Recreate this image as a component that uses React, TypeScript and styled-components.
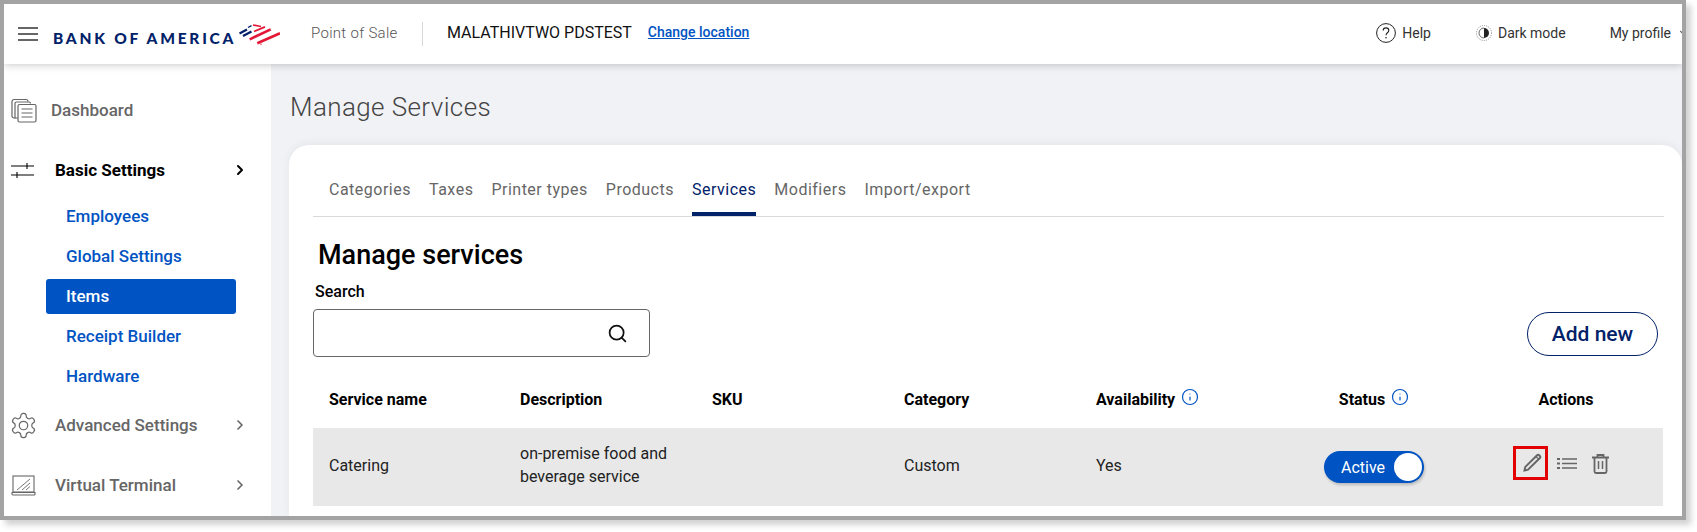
import React from 'react';
import styled, { createGlobalStyle } from 'styled-components';
import { ChevronDown, ChevronRight, Info, Search } from 'lucide-react';

const GlobalStyle = createGlobalStyle`
  html, body { margin: 0; padding: 0; background: #fff; }
  body { font-family: Roboto, "Liberation Sans", sans-serif; width: 1697px; height: 532px; overflow: hidden; }
`;

const Frame = styled.div`
  box-sizing: border-box;
  width: 1686px;
  height: 520px;
  border: 4px solid #a3a3a3;
  box-shadow: 5px 5px 6px rgba(0, 0, 0, 0.18);
  display: flex;
  flex-direction: column;
  overflow: hidden;
`;

const Header = styled.header`
  height: 60px;
  flex: none;
  display: flex;
  align-items: center;
  background: #fff;
  box-shadow: 0 1px 8px rgba(0, 0, 0, 0.22);
  position: relative;
  z-index: 2;
  white-space: nowrap;
`;

const MenuButton = styled.div`
  width: 20px;
  margin-left: 14px;
  display: flex;
  flex-direction: column;
  gap: 4px;
  span {
    height: 2px;
    background: #666;
  }
`;

const Logo = styled.div`
  display: flex;
  align-items: center;
  margin-left: 15px;
  width: 228px;
  svg {
    margin-left: 6px;
    flex: none;
  }
`;

const LogoText = styled.span`
  font-family: Lato, sans-serif;
  font-weight: 900;
  font-size: 15.5px;
  letter-spacing: 2.75px;
  line-height: 18px;
  color: #012169;
  margin-top: 8px;
  margin-right: -3px;
`;

const AppName = styled.span`
  margin-left: 30px;
  margin-bottom: 2px;
  width: 111px;
  font-size: 15px;
  font-weight: 300;
  color: #555;
  letter-spacing: 0.3px;
`;

const Location = styled.span`
  border-left: 1px solid #d8d8d8;
  height: 24px;
  padding-left: 24px;
  line-height: 22px;
  font-size: 16px;
  color: #111;
`;

const ChangeLocation = styled.a`
  margin-left: 16px;
  margin-bottom: 4px;
  font-size: 14px;
  font-weight: 500;
  color: #0053c2;
  text-decoration: underline;
`;

const HeaderRight = styled.div`
  margin-left: auto;
  display: flex;
  align-items: center;
  font-size: 14px;
  color: #333;
  margin-right: -9px;
  margin-bottom: 3px;
`;

const HeaderItem = styled.span<{ $gap: number }>`
  display: flex;
  align-items: center;
  gap: 6px;
  margin-right: ${(p) => p.$gap}px;
`;

const Body = styled.div`
  flex: 1;
  display: flex;
  min-height: 0;
`;

const Sidebar = styled.nav`
  width: 267px;
  flex: none;
  background: #fff;
  padding-top: 14.75px;
  box-sizing: border-box;
  position: relative;
  z-index: 1;
`;

const NavRow = styled.div<{ $active?: boolean; $height: number }>`
  display: flex;
  align-items: center;
  height: ${(p) => p.$height}px;
  font-size: 17px;
  font-weight: ${(p) => (p.$active ? 700 : 500)};
  color: ${(p) => (p.$active ? '#000' : '#666')};
  padding-left: 7px;
  padding-right: 23px;
`;

const NavIcon = styled.span<{ $width: number }>`
  width: ${(p) => p.$width}px;
  flex: none;
  display: flex;
`;

const NavLabel = styled.span`
  flex: 1;
`;

const SubList = styled.div`
  margin: 0 0 16.4px 42px;
  display: flex;
  flex-direction: column;
  gap: 5px;
`;

const SubItem = styled.div<{ $active?: boolean }>`
  width: 190px;
  height: 35px;
  line-height: 35px;
  box-sizing: border-box;
  padding-left: 20px;
  border-radius: 3px;
  font-size: 17px;
  font-weight: 500;
  color: ${(p) => (p.$active ? '#fff' : '#0053c2')};
  background: ${(p) => (p.$active ? '#0053c2' : 'transparent')};
`;

const Main = styled.main`
  flex: 1;
  min-width: 0;
  background: #f1f2f6;
  padding-left: 18px;
  display: flex;
  flex-direction: column;
`;

const PageTitle = styled.h1`
  margin: 0 0 0 1px;
  height: 81px;
  line-height: 86px;
  font-size: 26px;
  font-weight: 300;
  color: #444;
  letter-spacing: 0.4px;
  flex: none;
`;

const Card = styled.section`
  flex: 1;
  background: #fff;
  border-radius: 20px 20px 0 0;
  padding: 0 18px 0 24px;
  box-shadow: 0 -2px 10px rgba(0, 0, 0, 0.05);
`;

const Tabs = styled.div`
  display: flex;
  gap: 18px;
  height: 72px;
  padding-left: 16px;
  border-bottom: 1px solid #d9d9d9;
  box-sizing: border-box;
`;

const Tab = styled.div<{ $active?: boolean }>`
  font-size: 16px;
  letter-spacing: 0.5px;
  color: ${(p) => (p.$active ? '#012169' : '#666')};
  padding-top: 35px;
  box-sizing: border-box;
  height: 71px;
  border-bottom: ${(p) => (p.$active ? '4px solid #012169' : 'none')};
`;

const CardTitle = styled.h2`
  margin: 21px 0 0 5px;
  font-size: 27px;
  line-height: 34px;
  font-weight: 500;
  color: #000;
`;

const Toolbar = styled.div`
  display: flex;
  justify-content: space-between;
  align-items: flex-end;
  margin-top: 10px;
`;

const Field = styled.div`
  margin-left: 2px;
`;

const FieldLabel = styled.label`
  display: block;
  font-size: 16px;
  font-weight: 500;
  color: #000;
  line-height: 20px;
  margin-bottom: 7px;
`;

const SearchBox = styled.div`
  box-sizing: border-box;
  width: 337px;
  margin-left: -2px;
  height: 48px;
  border: 1px solid #666;
  border-radius: 4px;
  display: flex;
  align-items: center;
  justify-content: flex-end;
  padding-right: 21px;
  color: #111;
`;

const AddButton = styled.button`
  width: 131px;
  height: 44px;
  margin-right: 6px;
  margin-bottom: 1px;
  background: #fff;
  border: 1px solid #012169;
  border-radius: 22px;
  color: #012169;
  font-family: inherit;
  font-size: 21px;
  font-weight: 500;
`;

const Grid = styled.div`
  display: grid;
  grid-template-columns: 191px 192px 192px 192px 199px 190px 194px;
`;

const HeadCell = styled.div<{ $center?: boolean }>`
  height: 71px;
  box-sizing: border-box;
  padding-top: 13px;
  display: flex;
  align-items: center;
  justify-content: ${(p) => (p.$center ? 'center' : 'flex-start')};
  gap: 6px;
  padding-left: ${(p) => (p.$center ? 0 : 16)}px;
  font-size: 16px;
  font-weight: 700;
  color: #000;
  svg {
    color: #0053c2;
    margin-top: -5px;
  }
`;

const Cell = styled.div<{ $center?: boolean }>`
  box-sizing: border-box;
  height: 78px;
  padding-bottom: 4px;
  background: #e8e8e8;
  display: flex;
  align-items: center;
  justify-content: ${(p) => (p.$center ? 'center' : 'flex-start')};
  padding-left: ${(p) => (p.$center ? 0 : 16)}px;
  font-size: 16px;
  line-height: 23px;
  color: #222;
`;

const Toggle = styled.div`
  box-sizing: border-box;
  width: 100px;
  height: 32px;
  margin-top: 4px;
  border-radius: 16px;
  background: #0053c2;
  color: #fff;
  font-size: 16px;
  display: flex;
  align-items: center;
  justify-content: space-between;
  padding: 0 2px 0 17px;
  box-shadow: 1px 2px 3px rgba(0, 0, 0, 0.2);
  i {
    width: 28px;
    height: 28px;
    background: #fff;
    border-radius: 50%;
  }
`;

const Actions = styled.div`
  height: 78px;
  background: #e8e8e8;
  display: flex;
  align-items: center;
  padding-left: 44px;
`;

const EditButton = styled.span`
  box-sizing: border-box;
  width: 35px;
  height: 34px;
  border: 3px solid #e30000;
  padding-left: 4px;
  display: flex;
  align-items: center;
  justify-content: center;
  margin-bottom: 9px;
`;

const ActionIcon = styled.span<{ $left: number }>`
  display: flex;
  margin-left: ${(p) => p.$left}px;
  margin-bottom: 7px;
`;

const GearSlot = styled.span`
  display: flex;
  margin: 0 0 0 -2px;
`;

const FlagLogo = () => (
  <svg width="41" height="21" viewBox="0 0 41 21" fill="none" strokeLinecap="butt">
    <path d="M0.500 9.500L8 5.500M4 12l8.500-4.500" stroke="#012169" strokeWidth="2.200" />
    <path d="M9 3.500l3.500-1.800" stroke="#012169" strokeWidth="1.300" />
    <path d="M14 1l8 1.500" stroke="#e31837" strokeWidth="1.600" />
    <path d="M15 7.500L26 2.800" stroke="#e31837" strokeWidth="1.800" />
    <path d="M10.700 15.300L31.700 5.300" stroke="#e31837" strokeWidth="2.600" />
    <path d="M18.300 19.300L41 9.300" stroke="#e31837" strokeWidth="2.600" />
    <circle cx="22" cy="20.300" r="0.700" fill="#e31837" />
  </svg>
);

const HelpIcon = () => (
  <svg width="20" height="20" viewBox="0 0 20 20" fill="none">
    <circle cx="10" cy="10" r="9.400" stroke="#222" strokeWidth="1" />
    <path d="M7.200 7.600c0-1.700 1.200-2.700 2.800-2.700s2.800 1 2.800 2.500c0 2.400-2.800 2.300-2.800 4.800" stroke="#222" strokeWidth="1.100" />
    <circle cx="10" cy="14.800" r=".8" fill="#222" />
  </svg>
);

const DarkIcon = () => (
  <svg width="16" height="16" viewBox="0 0 16 16" fill="none">
    <circle cx="8" cy="8" r="7.500" stroke="#888" strokeWidth="1" strokeDasharray="1 1.200" />
    <path d="M8 3a5 5 0 0 1 0 10z" fill="#222" />
    <path d="M8 3a5 5 0 0 0 0 10" stroke="#444" strokeWidth=".8" />
  </svg>
);

const DashboardIcon = () => (
  <svg width="26" height="25" viewBox="0 0 26 25" fill="none" stroke="#666" strokeWidth="1.200">
    <path d="M7 20H3a2 2 0 0 1-2-2V3.500A2 2 0 0 1 3 1.500h12a2 2 0 0 1 2 2" />
    <path d="M4 5.500a1.500 1.500 0 0 1 1.500-1.500h12.500a1.500 1.500 0 0 1 1.500 1.500M4 5.500v15" />
    <rect x="7" y="6.500" width="18" height="17.500" rx="1.500" fill="#fff" />
    <path d="M10.500 11h11M10.500 15h11M10.500 19h11" />
  </svg>
);

const SlidersIcon = () => (
  <svg width="24" height="16" viewBox="0 0 24 16" fill="none" stroke="#000" strokeWidth="1.100">
    <path d="M0 4h23M0 13h23M16 1v6M6 10v6" />
  </svg>
);

const GearIcon = () => (
  <svg width="29" height="29" viewBox="0 0 24 24" fill="none" stroke="#666" strokeWidth="1">
    <path d="M12.220 2h-.440a2 2 0 0 0-2 2v.180a2 2 0 0 1-1 1.730l-.430.250a2 2 0 0 1-2 0l-.150-.080a2 2 0 0 0-2.730.730l-.220.380a2 2 0 0 0 .730 2.730l.150.100a2 2 0 0 1 1 1.720v.510a2 2 0 0 1-1 1.740l-.150.090a2 2 0 0 0-.730 2.730l.220.380a2 2 0 0 0 2.730.730l.150-.080a2 2 0 0 1 2 0l.430.250a2 2 0 0 1 1 1.730V20a2 2 0 0 0 2 2h.440a2 2 0 0 0 2-2v-.180a2 2 0 0 1 1-1.730l.430-.250a2 2 0 0 1 2 0l.150.080a2 2 0 0 0 2.730-.730l.220-.390a2 2 0 0 0-.730-2.730l-.150-.080a2 2 0 0 1-1-1.740v-.500a2 2 0 0 1 1-1.740l.150-.090a2 2 0 0 0 .730-2.730l-.220-.380a2 2 0 0 0-2.730-.730l-.150.080a2 2 0 0 1-2 0l-.430-.250a2 2 0 0 1-1-1.730V4a2 2 0 0 0-2-2z" />
    <circle cx="12" cy="12" r="3.500" />
  </svg>
);

const TerminalIcon = () => (
  <svg width="25" height="21" viewBox="0 0 25 21" fill="none" stroke="#666" strokeWidth="1.100">
    <rect x="2" y="1" width="21" height="16" fill="#fff" />
    <path d="M6 15L19 4M11 15l8-7M15 15l4-3.500" strokeWidth=".9" />
    <path d="M1 17.500h23v1.500a1 1 0 0 1-1 1H2a1 1 0 0 1-1-1z" />
  </svg>
);

const PencilIcon = () => (
  <svg width="19" height="19" viewBox="0 0 19 19" fill="none" stroke="#666" strokeWidth="2">
    <path d="M1.500 17.500l.8-3.600L14.100 2.200a1.400 1.400 0 0 1 2 0l.8.800a1.400 1.400 0 0 1 0 2L5 16.700z" />
    <path d="M13 3.500l2.600 2.600" strokeWidth="1.200" />
  </svg>
);

const ListIcon = () => (
  <svg width="20" height="11" viewBox="0 0 20 11" fill="#666">
    <path d="M0 0h3v2H0zM0 4.500h3v2H0zM0 9h3v2H0zM5 .3h15v1.400H5zM5 4.800h15v1.400H5zM5 9.300h15v1.400H5z" />
  </svg>
);

const TrashIcon = () => (
  <svg width="17" height="20" viewBox="0 0 17 20" fill="none" stroke="#666" strokeWidth="1.800">
    <path d="M0 3.500h17M5.500 3V1h6v2" />
    <path d="M2.500 3.500V17.500a1.500 1.500 0 0 0 1.500 1.500h9a1.500 1.500 0 0 0 1.500-1.500V3.500" />
    <path d="M6.500 7v8M10.500 7v8" strokeWidth="1.500" />
  </svg>
);

const App = () => (
  <>
    <GlobalStyle />
    <Frame>
      <Header>
        <MenuButton>
          <span />
          <span />
          <span />
        </MenuButton>
        <Logo>
          <LogoText>BANK OF AMERICA</LogoText>
          <FlagLogo />
        </Logo>
        <AppName>Point of Sale</AppName>
        <Location>MALATHIVTWO PDSTEST</Location>
        <ChangeLocation>Change location</ChangeLocation>
        <HeaderRight>
          <HeaderItem $gap={45}>
            <HelpIcon />
            Help
          </HeaderItem>
          <HeaderItem $gap={44}>
            <DarkIcon />
            Dark mode
          </HeaderItem>
          <HeaderItem $gap={0}>
            My profile
            <ChevronDown size={14} color="#666" />
          </HeaderItem>
        </HeaderRight>
      </Header>
      <Body>
        <Sidebar>
          <NavRow $height={62.5}>
            <NavIcon $width={40}>
              <DashboardIcon />
            </NavIcon>
            <NavLabel>Dashboard</NavLabel>
          </NavRow>
          <NavRow $active $height={57.5}>
            <NavIcon $width={44}>
              <SlidersIcon />
            </NavIcon>
            <NavLabel>Basic Settings</NavLabel>
            <ChevronRight size={16} strokeWidth={3} />
          </NavRow>
          <SubList>
            <SubItem>Employees</SubItem>
            <SubItem>Global Settings</SubItem>
            <SubItem $active>Items</SubItem>
            <SubItem>Receipt Builder</SubItem>
            <SubItem>Hardware</SubItem>
          </SubList>
          <NavRow $height={30}>
            <NavIcon $width={44}>
              <GearSlot>
                <GearIcon />
              </GearSlot>
            </NavIcon>
            <NavLabel>Advanced Settings</NavLabel>
            <ChevronRight size={16} strokeWidth={2.500} />
          </NavRow>
          <NavRow $height={90}>
            <NavIcon $width={44}>
              <TerminalIcon />
            </NavIcon>
            <NavLabel>Virtual Terminal</NavLabel>
            <ChevronRight size={16} strokeWidth={2.500} />
          </NavRow>
        </Sidebar>
        <Main>
          <PageTitle>Manage Services</PageTitle>
          <Card>
            <Tabs>
              <Tab>Categories</Tab>
              <Tab>Taxes</Tab>
              <Tab>Printer types</Tab>
              <Tab>Products</Tab>
              <Tab $active>Services</Tab>
              <Tab>Modifiers</Tab>
              <Tab>Import/export</Tab>
            </Tabs>
            <CardTitle>Manage services</CardTitle>
            <Toolbar>
              <Field>
                <FieldLabel>Search</FieldLabel>
                <SearchBox>
                  <Search size={21} strokeWidth={2} />
                </SearchBox>
              </Field>
              <AddButton>Add new</AddButton>
            </Toolbar>
            <Grid>
              <HeadCell>Service name</HeadCell>
              <HeadCell>Description</HeadCell>
              <HeadCell>SKU</HeadCell>
              <HeadCell>Category</HeadCell>
              <HeadCell>
                Availability
                <Info size={18} strokeWidth={1.600} />
              </HeadCell>
              <HeadCell $center>
                Status
                <Info size={18} strokeWidth={1.600} />
              </HeadCell>
              <HeadCell $center>Actions</HeadCell>
              <Cell>Catering</Cell>
              <Cell>
                on-premise food and
                <br />
                beverage service
              </Cell>
              <Cell />
              <Cell>Custom</Cell>
              <Cell>Yes</Cell>
              <Cell $center>
                <Toggle>
                  Active
                  <i />
                </Toggle>
              </Cell>
              <Actions>
                <EditButton>
                  <PencilIcon />
                </EditButton>
                <ActionIcon $left={9}>
                  <ListIcon />
                </ActionIcon>
                <ActionIcon $left={15}>
                  <TrashIcon />
                </ActionIcon>
              </Actions>
            </Grid>
          </Card>
        </Main>
      </Body>
    </Frame>
  </>
);

export default App;
